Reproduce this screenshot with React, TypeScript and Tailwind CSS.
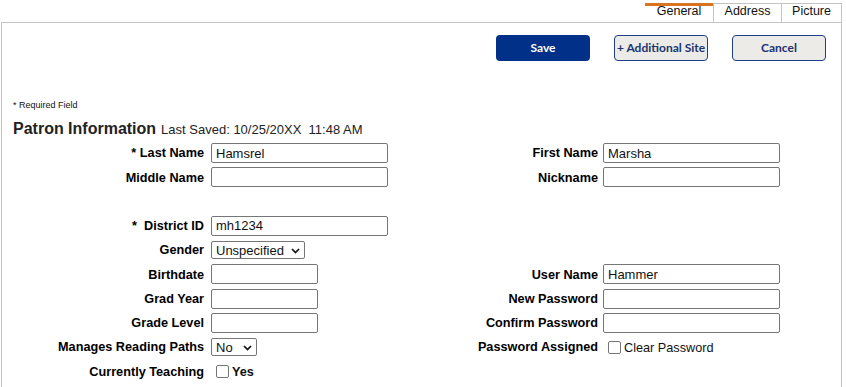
import type { ReactNode } from 'react';

const labelCls = 'text-[12.7px] font-bold text-black leading-none whitespace-pre';

function TextBox({ value = '', w = 'w-[177px]' }: { value?: string; w?: string }) {
  return (
    <div
      className={`${w} h-[20px] border border-[#767676] rounded-[2px] bg-white px-[4px] flex items-center text-[13px] text-[#111] leading-none`}
    >
      {value}
    </div>
  );
}

function SelectBox({ value, w }: { value: string; w: string }) {
  return (
    <div
      className={`${w} h-[18px] border border-[#767676] rounded-[2px] bg-white pl-[4px] pr-[4px] flex items-center justify-between text-[13px] text-[#111] leading-none`}
    >
      <span>{value}</span>
      <svg width="9" height="6" viewBox="0 0 9 6" className="mt-[1px]">
        <path d="M1 1l3.5 3.5L8 1" fill="none" stroke="#111" strokeWidth="1.7" />
      </svg>
    </div>
  );
}

function Check() {
  return <span className="inline-block w-[13px] h-[13px] border border-[#767676] rounded-[2px] bg-white" />;
}

function Row({ left, leftField, right, rightField }: { left?: string; leftField?: ReactNode; right?: string; rightField?: ReactNode }) {
  return (
    <div className="flex items-center h-[24.25px]">
      <div className={`w-[202px] text-right pt-[1px] ${labelCls}`}>{left}</div>
      <div className="w-[177px] ml-[7px] flex items-center">{leftField}</div>
      <div className={`w-[210px] text-right pt-[1px] ${labelCls}`}>{right}</div>
      <div className="w-[177px] ml-[5px] flex items-center">{rightField}</div>
    </div>
  );
}

export default function App() {
  return (
    <div className="w-[846px] h-[387px] bg-white overflow-hidden" style={{ fontFamily: '"Liberation Sans", Arial, sans-serif' }}>
      {/* tabs */}
      <div className="flex justify-end pr-[4px] pt-[3px]">
        <div className="w-[68px] h-[19px] border-t-[3px] border-[#d9731f] flex items-center justify-center text-[12.5px] text-[#111] leading-none pb-[5px]">
          General
        </div>
        <div className="w-[68px] h-[19px] border-t border-l border-[#c4c4c4] flex items-center justify-center text-[12.5px] text-[#111] leading-none pb-[4px]">
          Address
        </div>
        <div className="w-[61px] h-[19px] border-t border-x border-[#c4c4c4] flex items-center justify-center text-[12.5px] text-[#111] leading-none pb-[4px]">
          Picture
        </div>
      </div>

      <div className="ml-[1px] mr-[4px] h-[366px] border-t border-x border-[#c4c4c4]">
        {/* buttons */}
        <div className="flex justify-end gap-[24px] pr-[15px] pt-[12px]" style={{ fontFamily: 'Lato, "Open Sans", sans-serif' }}>
          <button className="w-[94px] h-[26px] rounded-[4px] bg-[#003087] text-white text-[12px] font-bold">Save</button>
          <button className="w-[94px] h-[26px] rounded-[4px] bg-[#ecebe7] border border-[#1d3f8a] text-[#1b3470] text-[12px] font-bold">
            + Additional Site
          </button>
          <button className="w-[94px] h-[26px] rounded-[4px] bg-[#ecebe7] border border-[#1d3f8a] text-[#1b3470] text-[12px] font-bold">
            Cancel
          </button>
        </div>

        <div className="pl-[11px] mt-[38px] h-[12px] flex items-center text-[9px] text-[#111] leading-none">* Required Field</div>
        <div className="pl-[11px] mt-[6px] h-[20px] flex items-end gap-[5px] text-[#222]">
          <span className="text-[16px] font-bold leading-none">Patron Information</span>
          <span className="text-[13px] leading-none mb-[1px] whitespace-pre">Last Saved: 10/25/20XX  11:48 AM</span>
        </div>

        <div className="mt-[4px]">
          <Row left="* Last Name" leftField={<TextBox value="Hamsrel" />} right="First Name" rightField={<TextBox value="Marsha" />} />
          <Row left="Middle Name" leftField={<TextBox />} right="Nickname" rightField={<TextBox />} />
          <Row />
          <Row left="*  District ID" leftField={<TextBox value="mh1234" />} />
          <Row left="Gender" leftField={<SelectBox value="Unspecified" w="w-[94px]" />} />
          <Row left="Birthdate" leftField={<TextBox w="w-[107px]" />} right="User Name" rightField={<TextBox value="Hammer" />} />
          <Row left="Grad Year" leftField={<TextBox w="w-[107px]" />} right="New Password" rightField={<TextBox />} />
          <Row left="Grade Level" leftField={<TextBox w="w-[107px]" />} right="Confirm Password" rightField={<TextBox />} />
          <Row
            left="Manages Reading Paths"
            leftField={<SelectBox value="No" w="w-[46px]" />}
            right="Password Assigned"
            rightField={
              <span className="flex items-center gap-[3px] ml-[5px] text-[12.7px] text-[#111] leading-none">
                <Check />
                <span className="mt-[2px]">Clear Password</span>
              </span>
            }
          />
          <Row
            left="Currently Teaching"
            leftField={
              <span className="flex items-center gap-[3px] ml-[5px] text-[12.7px] font-bold text-[#111] leading-none">
                <Check />
                <span className="mt-[2px]">Yes</span>
              </span>
            }
          />
        </div>
      </div>
    </div>
  );
}
